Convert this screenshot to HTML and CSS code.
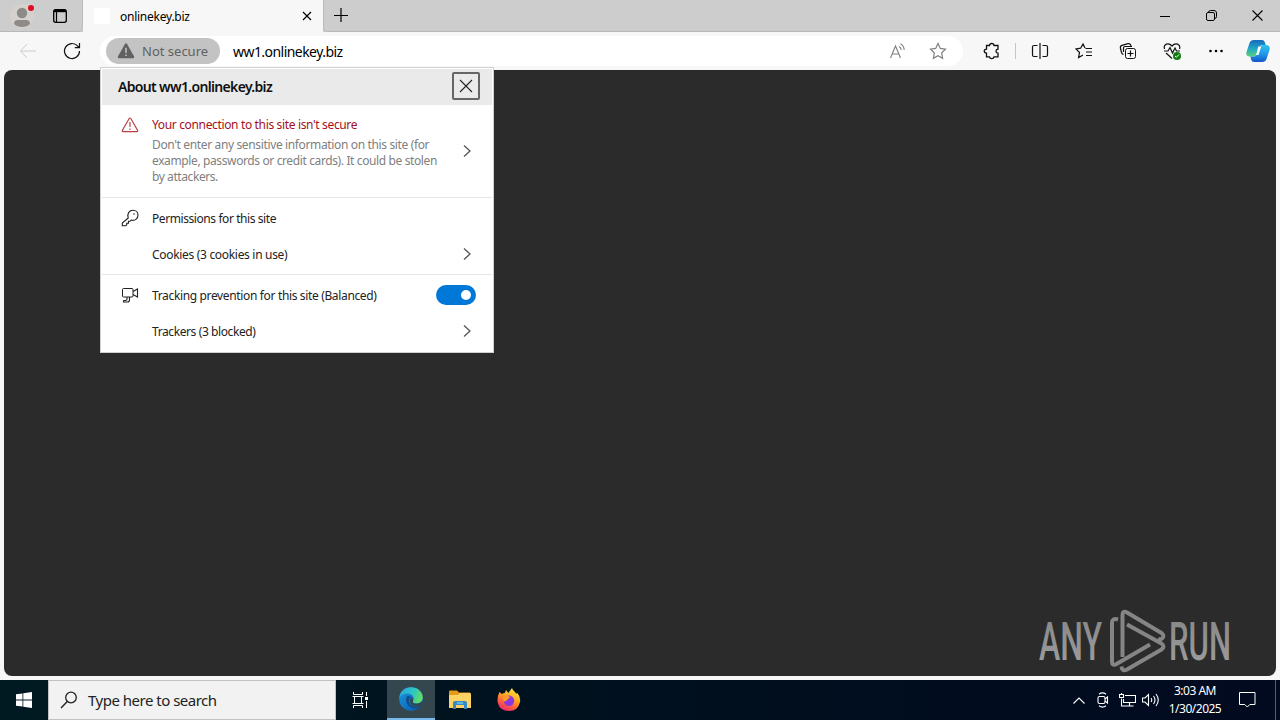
FILE: index.html
```html
<!DOCTYPE html>
<html lang="en">
<head>
	<meta charset="UTF-8">
	<title>onlinekey.biz</title>
	<link rel="stylesheet" href="styles.css">
</head>
<body>
	<div class="browser">
		<div class="titlebar">
			<div class="profile">
				<svg width="26" height="28" viewBox="0 0 26 28"><circle cx="12" cy="14" r="12" fill="#d4d1ce"/><circle cx="12" cy="11" r="5.2" fill="#8d8a88"/><path d="M4 22q0-4 4-4h8q4 0 4 4-3 3-8 3t-8-3z" fill="#8d8a88"/><circle cx="21" cy="6" r="3" fill="#e00b1c"/></svg>
			</div>
			<div class="tab-actions">
				<svg class="line" width="16" height="16" viewBox="0 0 16 16"><rect x="1.7" y="1.7" width="12.6" height="12.6" rx="2" stroke-width="1.3"/><path d="M2 3h12" stroke-width="2.4"/><path d="M4.5 4v10" stroke-width="1.2"/></svg>
			</div>
			<div class="tab">
				<span class="favicon"></span>
				<span class="tab-title">onlinekey.biz</span>
				<svg class="line" width="10" height="10" viewBox="0 0 10 10"><path d="M1 1l8 8M9 1l-8 8" stroke-width="1.2"/></svg>
			</div>
			<div class="new-tab">
				<svg class="line" width="14" height="14" viewBox="0 0 14 14"><path d="M7 0v14M0 7.5h14" stroke-width="1.2"/></svg>
			</div>
			<div class="window-buttons">
				<span><svg class="line" width="10" height="10" viewBox="0 0 10 10"><path d="M0 5.5h10"/></svg></span>
				<span><svg class="line" width="11" height="11" viewBox="0 0 11 11"><rect x=".5" y="2.5" width="8" height="8" rx="1.5"/><path d="M2.5 2.5Q2.5.5 4.5.5H8q2.5 0 2.5 2.5v3.5q0 2-2 2"/></svg></span>
				<span><svg class="line" width="11" height="11" viewBox="0 0 11 11"><path d="M.5.5l10 10M10.5.5l-10 10" stroke-width="1.1"/></svg></span>
			</div>
		</div>

		<div class="toolbar">
			<span class="tool back"><svg class="line" width="18" height="16" viewBox="0 0 18 16"><path d="M8 1L1.5 8l6.5 7M1.5 8H17"/></svg></span>
			<span class="tool"><svg class="line" width="18" height="18" viewBox="0 0 18 18"><path d="M16.5 9A7.500 7.500 0 1 1 14.500 3.900L16 5.500M16.500 1v4.700h-4.700" stroke-width="1.2"/></svg></span>
			<div class="address">
				<div class="security">
					<svg width="18" height="16" viewBox="0 0 18 16"><path d="M7.800 1.200q1.200-1.800 2.400 0l6.800 12q.8 1.900-1.200 2.100H2.200Q.2 15.100 1 13.200z" fill="#616161"/><path d="M9 4.800v5.200M9 11.500v1.600" stroke="#c3c3c3" stroke-width="1.500"/></svg>
					<span>Not secure</span>
				</div>
				<span class="url">ww1.onlinekey.biz</span>
				<span class="address-icon"><svg class="line" width="18" height="16" viewBox="0 0 18 16"><path d="M1.500 15L6.500 3l5 12M3.200 11h6.600M10 3.500q2 1 2.300 3.500M11.500.8q3.400 1.800 3.700 6.200" stroke-width="1.100"/></svg></span>
				<span class="address-icon"><svg class="line" width="18" height="18" viewBox="0 0 18 18"><path d="M9 1.500l2.300 4.900 5.200.7-3.800 3.700.9 5.500L9 13.700l-4.600 2.600.9-5.500L1.500 7.100l5.200-.7z" stroke-width="1.200"/></svg></span>
			</div>
			<span class="tool extensions"><svg class="line" width="18" height="18" viewBox="0 0 18 18"><path d="M3.500 3.500h3c.2-2.700 4.300-2.700 4.500 0h4v3.700c-2.700.3-2.700 3.700 0 4v3.600h-4c-.3 2.500-4.200 2.500-4.500 0h-3v-3.600c-3-.3-3-4 0-4z" stroke-width="1.300"/></svg></span>
			<span class="divider"></span>
			<span class="tool"><svg class="line" width="18" height="18" viewBox="0 0 18 18"><path d="M6.500 3.500H3Q1.500 3.500 1.500 5v8Q1.500 14.500 3 14.500h3.500M11.500 3.500H15q1.500 0 1.500 1.500v8q0 1.500-1.500 1.500h-3.500M9 1v16" stroke-width="1.200"/></svg></span>
			<span class="tool"><svg class="line" width="18" height="18" viewBox="0 0 18 18"><path d="M10.500 6.500H17M11 10h6M11 13.500h6M10 6L8 2 5.600 6.200l-4.600.7 3.500 3.600-.9 5L8 13" stroke-width="1.200"/></svg></span>
			<span class="tool"><svg class="line" width="18" height="18" viewBox="0 0 18 18"><rect x="6.500" y="6.500" width="10" height="10" rx="2"/><path d="M11.500 8.500v6M8.500 11.500h6M4.500 12.500Q3 12 2.500 10.500L1.400 6Q1 4 3 3.400l6-1.700q2-.5 2.700 1.500l.3.900M4.500 10V6q0-1.500 1.500-1.500h7" stroke-width="1.200"/></svg></span>
			<span class="tool"><svg class="line" width="18" height="18" viewBox="0 0 18 18"><path d="M1.500 7C0 2 5.500 0 9 4c3.500-4 9-2 7.500 3M1 9h4l2-3.500 2.500 5.500L12 6l1.500 3H17M3 11l6 5.500" stroke-width="1.200"/><circle cx="14" cy="14" r="4" fill="#107c10" stroke="none"/><path d="M12 14l1.400 1.300L16 12.500" stroke="#fff"/></svg></span>
			<span class="tool"><svg width="14" height="4" viewBox="0 0 14 4"><circle cx="1.500" cy="2" r="1.300"/><circle cx="7" cy="2" r="1.300"/><circle cx="12.500" cy="2" r="1.300"/></svg></span>
			<span class="copilot">
				<svg width="24" height="24" viewBox="0 0 24 24">
					<defs>
						<linearGradient id="cpA" x1="0" y1="0" x2="0" y2="1"><stop offset="0" stop-color="#1669bd"/><stop offset=".5" stop-color="#20a5c6"/><stop offset="1" stop-color="#57d37c"/></linearGradient>
						<linearGradient id="cpB" x1="0" y1="0" x2="0" y2="1"><stop offset="0" stop-color="#35c0ea"/><stop offset=".5" stop-color="#219bea"/><stop offset="1" stop-color="#1455cb"/></linearGradient>
					</defs>
					<path d="M8 1h8q2 0 2.700 2l1 3H15l-3 8q-1.200 3.500-4.500 3.500h-4Q-.5 17.500.5 13L3.500 4Q4.500 1 8 1z" fill="url(#cpA)"/>
					<path d="M16 23H8q-2 0-2.700-2l-1-3.500H8q2.300 0 3.200-3l2-5Q14.200 6 17 6h3.500q4 .5 3 5l-3 9q-1 3-4.500 3z" fill="url(#cpB)"/>
					<path d="M12.300 7.500h2.900L12.500 16H9.400q1-.8 1.400-2.500z" fill="#fff"/>
				</svg>
			</span>
		</div>

		<div class="page">
			<svg class="watermark" width="196" height="68" viewBox="0 0 196 68">
				<defs><linearGradient id="wm" x1="0" y1="0" x2="0" y2="1"><stop offset="0" stop-color="#858585"/><stop offset="1" stop-color="#a0a0a0"/></linearGradient></defs>
				<text x="1" y="52" textLength="63" lengthAdjust="spacingAndGlyphs">ANY</text>
				<text x="131" y="52" textLength="62" lengthAdjust="spacingAndGlyphs">RUN</text>
				<g fill="none" stroke="#858585" stroke-width="4" stroke-linejoin="round">
					<path d="M80 11.500Q74 9.500 74 15v38.500q0 5 4.500 2.500L112 36.500"/>
					<path d="M84.500 49V7q0-5 4.500-2.500L123.500 25q3.500 3 .5 5.500-2 1.500-4 0"/>
					<path d="M89 16.500L123.500 35.500q4 3 0 6L89 61.500q-5 2.500-5.500-3"/>
				</g>
			</svg>
		</div>

		<div class="site-info">
			<div class="info-header">
				<h1>About ww1.onlinekey.biz</h1>
				<button class="close" aria-label="Close"><svg class="line" width="14" height="14" viewBox="0 0 14 14"><path d="M1 1l12 12M13 1L1 13" stroke-width="1.100"/></svg></button>
			</div>
			<div class="section connection">
				<svg class="line warning" width="18" height="16" viewBox="0 0 18 16"><path d="M8.200 1.500q.8-1 1.600 0l6.900 12q.3 1-.7 1.200H2q-1-.2-.7-1.200zM9 5v5M9 11.500v1.500" stroke-width="1.200"/></svg>
				<div class="connection-text">
					<h2>Your connection to this site isn't secure</h2>
					<p><span class="l1">Don't enter any sensitive information on this site (for</span><br><span class="l2">example, passwords or credit cards). It could be stolen</span><br><span class="l3">by attackers.</span></p>
				</div>
				<svg class="line arrow" width="8" height="12" viewBox="0 0 8 12"><path d="M1 0.500l6 5.500-6 5.500" stroke-width="1.300"/></svg>
			</div>
			<div class="section">
				<div class="row first">
					<svg class="line" width="18" height="18" viewBox="0 0 18 18"><path d="M7.200 9C5.800 4.500 8.500 1.200 12 1.200c3 0 5 2.200 5 5 0 3.500-3.300 6-6.800 4.900L9 12.300H7.500v1.900H5.700V16L4.500 16.800H1.300V14z" stroke-width="1.100"/><circle cx="13" cy="5" r=".8" fill="#333" stroke="none"/></svg>
					<span class="permissions">Permissions for this site</span>
				</div>
				<div class="row">
					<span class="cookies">Cookies (3 cookies in use)</span>
					<svg class="line arrow" width="8" height="12" viewBox="0 0 8 12"><path d="M1 0.500l6 5.500-6 5.500" stroke-width="1.300"/></svg>
				</div>
			</div>
			<div class="section">
				<div class="row first">
					<svg class="line" width="18" height="18" viewBox="0 0 18 18"><rect x="1.500" y="2.500" width="10.500" height="8.500" rx="1"/><path d="M12 5.500l4.500-2.500v8L12 8.500M6 11v2q0 1.500-1.500 1.500H2.500M8.500 11v3q0 2-2 2h-4v-1.500" stroke-width="1.100"/></svg>
					<span class="tracking">Tracking prevention for this site (Balanced)</span>
					<span class="toggle"></span>
				</div>
				<div class="row">
					<span class="trackers">Trackers (3 blocked)</span>
					<svg class="line arrow" width="8" height="12" viewBox="0 0 8 12"><path d="M1 0.500l6 5.500-6 5.500" stroke-width="1.300"/></svg>
				</div>
			</div>
		</div>
	</div>

	<div class="taskbar">
		<div class="start"><svg width="16" height="16" viewBox="0 0 16 16"><path d="M0 2.300l6.500-.9v6.100H0zM7.300 1.300L16 0v7.500H7.300zM0 8.400h6.500v6.200L0 13.700zM7.300 8.400H16V16l-8.700-1.300z" fill="#fff"/></svg></div>
		<div class="search">
			<svg class="line" width="18" height="18" viewBox="0 0 18 18"><circle cx="11" cy="6.500" r="5.300" stroke-width="1.300"/><path d="M7.300 10.500L1 17" stroke-width="1.400"/></svg>
			<span>Type here to search</span>
		</div>
		<div class="app task-view"><svg width="17" height="16" viewBox="0 0 17 16"><path d="M1.500 0v2.500h9V0M1.500 16v-2.500h9V16M.5 4.500h11M.5 11.500h11M2.500 4.500v7M9.500 4.500v7M14.500 0v4M14.500 9v7" fill="none" stroke="#fff"/><path d="M13 5h3v3h-3z" fill="#fff"/></svg></div>
		<div class="app active">
			<svg width="24" height="24" viewBox="0 0 24 24">
				<defs>
					<linearGradient id="edTop" x1="0" y1=".3" x2="1" y2=".6"><stop offset="0" stop-color="#2ba5df"/><stop offset=".55" stop-color="#2fc6c3"/><stop offset="1" stop-color="#67df59"/></linearGradient>
					<linearGradient id="edLow" x1="0" y1="0" x2="1" y2="1"><stop offset="0" stop-color="#199be4"/><stop offset="1" stop-color="#0b55a5"/></linearGradient>
				</defs>
				<circle cx="12" cy="12" r="11.800" fill="url(#edLow)"/>
				<path d="M.3 11C1 4 6 .2 12 .2c7 0 12 5 11.800 10.500-.2 4.300-4 6-7.500 5.700-2.300-.2-3.300-1.200-2.300-2.600 2.200-3.200-.8-7.500-6-7.300C4.500 6.600 1.500 8.500.3 11z" fill="url(#edTop)"/>
				<path d="M8 9.500c-3 5 1.500 12 8 12 2.500 0 4.300-.9 6-3-6 3.500-12-.5-12-4.500 0-2 .7-3.200 2-4-1.200-1-2.800-1.200-4-.5z" fill="#124d8d"/>
				<path d="M14 14c-.8 1.500.3 2.700 3.500 2.700 2 0 4-.7 5.300-2l1.200 2.600-2 1.300c-5 2.500-11-.2-11-4.600 0-1.800.8-3 1.800-3.500 1.200 1 1.700 2.500 1.200 3.500z" fill="#34474f"/>
			</svg>
		</div>
		<div class="app">
			<svg width="22" height="20" viewBox="0 0 22 20"><path d="M0 1.500Q0 .5 1 .5h7l2 2H21v3H0z" fill="#e49a19"/><path d="M0 5h9l2-2h10q1 0 1 1v14H0z" fill="#ffd363"/><path d="M4 19v-6q0-2 2-2h10q2 0 2 2v6h-3v-4H7v4z" fill="#3888c2"/><path d="M8 12h6v2H8z" fill="#61b7e6"/></svg>
		</div>
		<div class="app">
			<svg width="24" height="24" viewBox="0 0 24 24">
				<defs><linearGradient id="ff" x1=".8" y1="0" x2=".3" y2="1"><stop offset="0" stop-color="#fff04c"/><stop offset=".4" stop-color="#ffad20"/><stop offset=".7" stop-color="#ff623a"/><stop offset="1" stop-color="#ed2676"/></linearGradient></defs>
				<path d="M2.500 4l2.300 2q1.600-1 3-1L9 2l2.300 3L15 0q.7 2.500 3 4l1.300 2 .7-1.500Q24 9 23 14q-2 9-11 9Q3 23 .8 15-.2 9 2.500 4z" fill="url(#ff)"/>
				<circle cx="12" cy="12.700" r="5.200" fill="#8b37df"/><path d="M5 9l5-1.500 3.500 1.500-3 2.500q-1 2-3.500 2z" fill="#ff992a"/>
			</svg>
		</div>
		<div class="tray">
			<span><svg width="12" height="7" viewBox="0 0 12 7"><path d="M.5 6.500L6 1l5.500 5.500"/></svg></span>
			<span><svg width="14" height="16" viewBox="0 0 14 16"><rect x="2" y="4.500" width="7" height="7" rx="1.500"/><path d="M9 7l2.500-2v6L9 9M3 2.200Q6.500-.4 10 2.200M3 13.800q3.500 2.600 7 0"/></svg></span>
			<span><svg width="17" height="14" viewBox="0 0 17 14"><path d="M6 2.500h10.500v7H4.500V6M10.500 9.500v3M6.500 13h8M2.500 5.500V13h4M.5 1.500h4v3h-4zM2.500 0v1.500"/></svg></span>
			<span><svg width="18" height="14" viewBox="0 0 18 14"><path d="M.5 5H3l3.500-3.500v11L3 9H.5zM9 5q1.500 2 0 4M11.500 3q3 4 0 8M14 1q4.500 6 0 12"/></svg></span>
		</div>
		<div class="clock"><span class="time">3:03 AM</span><span class="date">1/30/2025</span></div>
		<div class="notifications"><svg width="17" height="16" viewBox="0 0 17 16"><path d="M.5.5h15.500v12h-5.200L8.300 15l-2.500-2.500H.5z" fill="none" stroke="#fff"/></svg></div>
		<div class="show-desktop"></div>
	</div>
</body>
</html>
```
FILE: styles.css
```css
* {
	margin: 0;
	padding: 0;
	box-sizing: border-box;
}
body {
	width: 1280px;
	height: 720px;
	overflow: hidden;
	font-family: "Noto Sans", "Open Sans", sans-serif;
	font-size: 12px;
	color: #222;
}
svg {
	display: block;
	flex: none;
}
span, h1, h2 {
	white-space: nowrap;
}
.line {
	fill: none;
	stroke: currentColor;
	stroke-width: 1;
}

/* browser */
.browser {
	position: relative;
	height: 680px;
	background: #f7f7f7;
}
.titlebar {
	display: flex;
	height: 32px;
	background: #cdcdcd;
	color: #000;
}
.profile {
	width: 44px;
	height: 32px;
	padding: 2px 0 0 10px;
	border-bottom: 1px solid #b8b8b8;
}
.tab-actions {
	width: 39px;
	padding: 8px 0 0 8px;
	border-right: 1px solid #bbb;
	border-bottom: 1px solid #b8b8b8;
	border-bottom-right-radius: 5px;
}
.tab {
	display: flex;
	align-items: center;
	width: 240px;
	padding: 0 11px 0 11px;
	background: #f7f7f7;
}
.favicon {
	width: 16px;
	height: 16px;
	margin-right: 10px;
	background: #fff;
}
.tab-title {
	flex: 1;
	letter-spacing: -.25px;
}
.new-tab {
	padding: 8px 0 0 10px;
	width: 36px;
	border-left: 1px solid #b8b8b8;
	border-bottom: 1px solid #b8b8b8;
	border-bottom-left-radius: 5px;
}
.window-buttons {
	display: flex;
	flex: 1;
	justify-content: flex-end;
	border-bottom: 1px solid #b8b8b8;
}
.window-buttons span {
	display: flex;
	width: 46px;
	align-items: center;
	justify-content: center;
}
.toolbar {
	display: flex;
	align-items: center;
	height: 38px;
	padding-left: 6px;
	color: #111;
}
.tool {
	display: flex;
	width: 44px;
	justify-content: center;
}
.back {
	color: #ccc;
}
.address {
	display: flex;
	align-items: center;
	width: 863px;
	height: 30px;
	margin-left: 6px;
	border-radius: 15px;
	background: #fff;
}
.security {
	display: flex;
	align-items: center;
	width: 114px;
	height: 26px;
	margin: 0 13px 0 6px;
	padding-left: 11px;
	border-radius: 13px;
	background: #c3c3c3;
	color: #616161;
	font-size: 13px;
}
.security span {
	margin-left: 7px;
}
.url {
	flex: 1;
	font-size: 14px;
	letter-spacing: -.55px;
	color: #000;
}
.address-icon {
	display: flex;
	width: 40px;
	justify-content: center;
	color: #808080;
}
.address-icon:last-child {
	margin-right: 5px;
}
.extensions {
	width: 52px;
	margin-left: 3px;
}
.divider {
	width: 1px;
	height: 16px;
	margin-left: -3px;
	background: #c5c5c5;
}
.divider + .tool {
	margin-left: 2px;
}
.copilot {
	margin-left: 8px;
}
.page {
	display: flex;
	justify-content: flex-end;
	align-items: flex-end;
	height: 606px;
	margin: 0 4px;
	padding-right: 42px;
	border-radius: 8px;
	background: #2b2b2b;
}
.watermark text {
	font-family: Roboto, sans-serif;
	font-size: 53px;
	font-weight: 500;
	fill: url(#wm);
}

/* site information popup */
.site-info {
	position: absolute;
	left: 100px;
	top: 67px;
	width: 394px;
	height: 286px;
	padding: 1px;
	border: 1px solid #d0d0d0;
	background: #fff;
}
.info-header {
	display: flex;
	align-items: center;
	justify-content: space-between;
	height: 36px;
	padding: 0 12px 2px 16px;
	background: #eaeaea;
}
.info-header h1 {
	font-size: 14px;
	font-weight: 600;
	letter-spacing: -.67px;
	color: #111;
}
.close {
	display: flex;
	align-items: center;
	justify-content: center;
	width: 28px;
	height: 28px;
	border: 2px solid #666;
	border-radius: 2px;
	background: transparent;
	color: #222;
}
.section {
	padding: 2px 0 0 19px;
	height: 77px;
	border-top: 1px solid #e5e5e5;
}
.section.connection {
	display: flex;
	height: 92px;
	padding: 12px 21px 0 19px;
	border-top: 0;
}
.warning {
	color: #b84044;
}
.connection-text {
	flex: 1;
	margin-left: 13px;
}
.connection h2 {
	font-size: 12px;
	line-height: 16px;
	font-weight: 400;
	letter-spacing: -.35px;
	color: #a4101c;
}
.connection p {
	margin-top: 4px;
	line-height: 16px;
	color: #808080;
}
.l1 {
	letter-spacing: -.36px;
}
.l2 {
	letter-spacing: -.38px;
}
.l3 {
	letter-spacing: -.42px;
}
.arrow {
	color: #555;
}
.connection .arrow {
	margin-top: 28px;
}
.row {
	display: flex;
	align-items: center;
	justify-content: space-between;
	height: 36px;
	padding: 0 21px 0 31px;
}
.row.first {
	justify-content: flex-start;
	padding: 0 16px 0 0;
}
.row.first span {
	margin-left: 13px;
}
.permissions {
	letter-spacing: -.42px;
}
.cookies {
	letter-spacing: -.31px;
}
.tracking {
	letter-spacing: -.35px;
}
.trackers {
	letter-spacing: -.4px;
}
.row.first .toggle {
	width: 40px;
	height: 20px;
	margin-left: auto;
	padding: 5px;
	border-radius: 10px;
	background: #0078d7;
}
.toggle::after {
	content: '';
	display: block;
	width: 10px;
	height: 10px;
	margin-left: auto;
	border-radius: 50%;
	background: #fff;
}

/* taskbar */
.taskbar {
	display: flex;
	height: 40px;
	background: linear-gradient(to right, #001a22, #00101e 50%, #020a20);
	color: #fff;
}
.start {
	display: flex;
	width: 48px;
	align-items: center;
	justify-content: center;
}
.search {
	display: flex;
	align-items: center;
	width: 288px;
	padding-left: 11px;
	border: 1px solid #c2c2c2;
	background: #f2f2f2;
	color: #222;
	font-size: 15px;
}
.search span {
	margin-left: 10px;
	letter-spacing: -.5px;
}
.app {
	display: flex;
	width: 48px;
	margin-right: 1px;
	align-items: center;
	justify-content: center;
}
.task-view {
	margin-right: 3px;
}
.app.active {
	background: #34474f;
	border-bottom: 2px solid #76b9ed;
}
.tray {
	display: flex;
	margin-left: auto;
}
.tray span {
	display: flex;
	width: 24px;
	align-items: center;
	justify-content: center;
}
.tray svg {
	fill: none;
	stroke: #fff;
	stroke-width: 1.1;
}
.clock {
	display: flex;
	flex-direction: column;
	align-items: center;
	width: 64px;
	padding-top: 2px;
	line-height: 18px;
}
.clock span {
	letter-spacing: -.5px;
}
.notifications {
	display: flex;
	width: 40px;
	align-items: center;
	justify-content: center;
}
.show-desktop {
	width: 5px;
	margin-left: 8px;
	border-left: 1px solid #596070;
}
```
